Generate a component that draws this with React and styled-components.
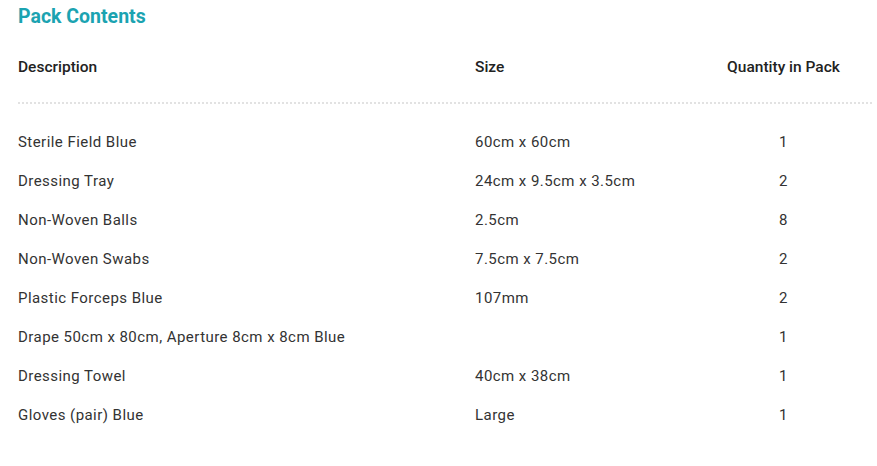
import React from 'react';
import styled, { createGlobalStyle } from 'styled-components';

const ITEMS = [
  { name: 'Sterile Field Blue', size: '60cm x 60cm', qty: 1 },
  { name: 'Dressing Tray', size: '24cm x 9.5cm x 3.5cm', qty: 2 },
  { name: 'Non-Woven Balls', size: '2.5cm', qty: 8 },
  { name: 'Non-Woven Swabs', size: '7.5cm x 7.5cm', qty: 2 },
  { name: 'Plastic Forceps Blue', size: '107mm', qty: 2 },
  { name: 'Drape 50cm x 80cm, Aperture 8cm x 8cm Blue', size: '', qty: 1 },
  { name: 'Dressing Towel', size: '40cm x 38cm', qty: 1 },
  { name: 'Gloves (pair) Blue', size: 'Large', qty: 1 },
];

const GlobalStyle = createGlobalStyle`
  body {
    margin: 0;
    background: #fff;
    font-family: Roboto, "Liberation Sans", sans-serif;
    color: #333;
  }
`;

function App() {
  return (
    <>
      <GlobalStyle />
      <Section>
        <Title>Pack Contents</Title>
        <Table>
          <HeadRow>
            <HeadCell>Description</HeadCell>
            <HeadCell>Size</HeadCell>
            <HeadCell center>Quantity in Pack</HeadCell>
          </HeadRow>
          <Body>
            {ITEMS.map(({ name, size, qty }) => (
              <Row key={name}>
                <Cell>{name}</Cell>
                <Cell>{size}</Cell>
                <Cell center>{qty}</Cell>
              </Row>
            ))}
          </Body>
        </Table>
      </Section>
    </>
  );
}

const Section = styled.section`
  padding: 5px 5px 0 18px;
`;
const Title = styled.h2`
  margin: 0;
  font-size: 19.5px;
  font-weight: 700;
  line-height: 24px;
  color: #1ba3b1;
`;
const Table = styled.div`
  margin-top: 13px;
`;
const columns = `
  display: grid;
  grid-template-columns: 457px 220px 1fr;
  align-items: center;
`;
const HeadRow = styled.div`
  ${columns};
  padding: 16px 0 26px;
  line-height: 18px;
  border-bottom: 2px dotted #e2e2e2;
`;
const HeadCell = styled.div`
  font-size: 15.5px;
  font-weight: 500;
  color: #222;
  text-align: ${({ center }) => (center ? 'center' : 'left')};
`;
const Body = styled.div`
  padding-top: 18px;
`;
const Row = styled.div`
  ${columns};
  height: 39px;
`;
const Cell = styled.div`
  font-size: 15px;
  letter-spacing: 0.45px;
  color: #333;
  text-align: ${({ center }) => (center ? 'center' : 'left')};
`;

export default App;
